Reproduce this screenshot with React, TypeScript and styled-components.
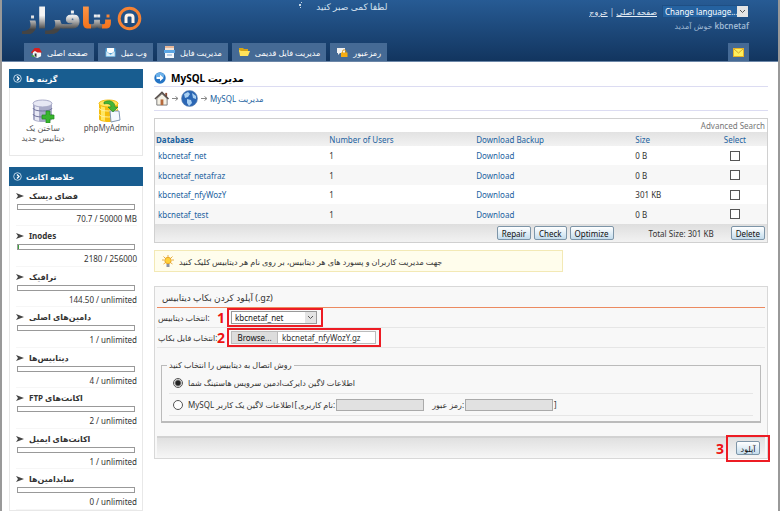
import React from 'react';
import styled, { createGlobalStyle, css } from 'styled-components';

const Global = createGlobalStyle`
  * { box-sizing: border-box; }
  body { margin: 0; background: #fff; }
  body, button, input, select { font-family: "Noto Sans", "DejaVu Sans", sans-serif; font-size: 8px; color: #333; }
  html { overflow: hidden; }
  a { color: #1b62a0; text-decoration: none; }
`;

const Page = styled.div`
  border-left: 2px solid #999;
  border-right: 2px solid #999;
  height: 100vh;
  overflow: hidden;
`;
const Header = styled.header`
  height: 62px;
  padding: 0 29px 0 20px;
  background: linear-gradient(#275b94, #12355f);
  border-bottom: 1px solid #6c87a8;
  color: #d5e2ef;
  display: flex;
  flex-direction: column;
  justify-content: space-between;
`;
const HeaderTop = styled.div`
  display: grid;
  grid-template-columns: 38% auto 1fr;
  height: 40px;
`;
const Brand = styled.div`
  display: flex;
  align-items: center;
  gap: 4px;
  height: 37px;
`;
const Word = styled.span`
  font: bold 27px/34px "DejaVu Sans", sans-serif;
  white-space: nowrap;
`;
const Part = styled.span<{ $orange?: boolean }>`
  color: transparent;
  -webkit-text-stroke: 1px transparent;
  background: ${p => (p.$orange ? 'linear-gradient(#ff9a4c, #f26a10)' : 'linear-gradient(#f4f4f4 40%, #aaa 60%, #444 85%)')};
  background-clip: text;
  -webkit-background-clip: text;
`;
const Wait = styled.div`
  display: flex;
  gap: 12px;
  line-height: 14px;
  font-size: 9px;
`;
const Account = styled.div`
  display: flex;
  flex-direction: column;
  align-items: flex-end;
  padding-top: 5px;
`;
const AccountRow = styled.div`
  display: flex;
  align-items: center;
  gap: 5px;
  a { color: #e6eef6; text-decoration: underline; }
`;
const Language = styled.select`
  width: 87px;
  height: 13px;
  padding: 0 0 0 2px;
  border: 1px solid #1f4f84;
  background: #2562a0;
  color: #fff;
  line-height: 11px;
  appearance: none;
`;
const Welcome = styled.span`
  color: #9fb9d4;
  line-height: 15px;
  b { font-weight: 600; }
`;
const SelectBox = styled.span`
  display: inline-grid;
  align-items: center;
  > * { grid-area: 1 / 1; }
  > svg { justify-self: end; margin-right: 1px; pointer-events: none; }
`;
const Nav = styled.nav`
  display: flex;
  gap: 4px;
  padding-left: 2px;
`;
const Tab = styled.a<{ $end?: boolean }>`
  display: flex;
  align-items: center;
  gap: 5px;
  height: 18px;
  padding: 0 6px 0 7px;
  background: #456a95;
  && { color: #fff; }
  ${p => p.$end && css`margin-left: auto; padding: 0 5px;`}
`;
const Body = styled.div`
  display: grid;
  grid-template-columns: 134px minmax(0, 1fr);
  gap: 11px;
  padding: 7px 10px 0 7px;
`;
const Side = styled.aside`
  display: flex;
  flex-direction: column;
  gap: 11px;
`;
const PanelTitle = styled.h2`
  display: flex;
  align-items: center;
  gap: 4px;
  height: 19px;
  margin: 0 -1px;
  padding: 0 4px;
  background: #185d90;
  color: #fff;
  font-size: 8px;
  font-weight: 700;
`;
const Panel = styled.section`
  border: 1px solid #e8e8e8;
  border-top: 0;
`;
const Tools = styled.div`
  display: grid;
  grid-template-columns: 1fr 1fr;
  height: 67px;
  padding-top: 11px;
  a { display: flex; flex-direction: column; align-items: center; color: #555; text-align: center; line-height: 10px; }
`;
const Stat = styled.div`
  margin: 0 5px 0 6px;
  padding: 2px 0 0;
  height: 41px;
  &:nth-of-type(odd) { height: 40px; }
  border-bottom: 1px solid #f6f6f6;
`;
const StatName = styled.div`
  display: flex;
  align-items: center;
  gap: 5px;
  line-height: 16px;
  font-weight: 700;
`;
const Bar = styled.div`
  height: 6px;
  margin: 0 2px 0 1px;
  border: 1px solid #999;
  background: #fff;
`;
const Fill = styled.div`
  height: 4px;
  background: #3ca03c;
`;
const StatValue = styled.div`
  text-align: right;
  line-height: 17px;
`;
const Main = styled.main`
  min-width: 0;
`;
const Title = styled.h1`
  display: flex;
  align-items: center;
  gap: 5px;
  height: 18px;
  margin: 0;
  color: #000;
  font-size: 10px;
  border-bottom: 1px solid #dcdcf2;
`;
const Crumbs = styled.div`
  display: flex;
  align-items: center;
  gap: 2px;
  height: 24px;
  border-bottom: 1px solid #dcdcf2;
  color: #777;
`;
const TableBox = styled.section`
  margin-top: 7px;
  border: 1px solid #d0d0d0;
`;
const Advanced = styled.div`
  height: 13px;
  line-height: 14px;
  padding-right: 2px;
  text-align: right;
  a { color: #777; }
`;
const Table = styled.table`
  width: 100%;
  table-layout: fixed;
  border-spacing: 0;
  line-height: 13px;
  th, td { padding: 0 3px; text-align: left; font-weight: 400; }
  th { height: 14px; color: #1b62a0; }
  th:first-child { padding-left: 1px; font-weight: 700; }
  th:last-child { text-align: center; padding: 0 3px 0 0; }
  td:last-child { padding: 0 3px 0 0; }
  thead tr { background: linear-gradient(#e2e2e2, #f2f2f2); }
  tbody tr { height: 19px; }
  tbody tr:nth-child(even) { height: 20px; background: #f7f7f7; }
`;
const Col = styled.col<{ $w: number }>`
  width: ${p => p.$w}%;
`;
const Tick = styled.input`
  appearance: none;
  display: block;
  width: 10px;
  height: 10px;
  margin: 0 auto;
  border: 1px solid #555;
  background: #fff;
`;
const Actions = styled.div`
  display: flex;
  align-items: center;
  justify-content: flex-end;
  gap: 3px;
  height: 18px;
  padding-right: 2px;
  background: linear-gradient(#dedede, #f2f2f2);
`;
const Total = styled.span`
  margin: 0 14px 0 32px;
`;
const Button = styled.button`
  height: 14px;
  padding: 0 4px;
  line-height: 11px;
  border: 1px solid #7d95a8;
  border-radius: 2px;
  background: linear-gradient(#fff, #dcebf5 60%, #c4dcec);
  color: #111;
`;
const Hint = styled.div`
  display: flex;
  align-items: center;
  gap: 5px;
  width: 66.6%;
  height: 22px;
  margin-top: 7px;
  padding-left: 7px;
  border: 1px solid #f3e9b5;
  background: #fffdec;
`;
const Form = styled.form`
  margin-top: 14px;
  border: 1px solid #d8d8d8;
  background: #f8f8f8;
  padding: 0 2px;
`;
const FormTitle = styled.h2`
  height: 21px;
  margin: 0;
  padding: 2px 5px 0;
  line-height: 18px;
  font-size: 9px;
  font-weight: 400;
  border-bottom: 1px solid #ec8a60;
`;
const Line = styled.div`
  display: flex;
  align-items: center;
  height: 20px;
  border-bottom: 1px solid #e6e6e6;
  label { width: 58px; padding-left: 1px; white-space: nowrap; }
`;
const Step = styled.b`
  width: 12px;
  text-align: center;
  color: #ee1111;
  font: bold 14px "Open Sans", sans-serif;
`;
const Mark = styled.span<{ $w: number }>`
  display: flex;
  align-items: center;
  width: ${p => p.$w}px;
  height: 19px;
  padding: 0 2px;
  border: 2px solid #ed1c24;
`;
const DbSelect = styled.select`
  width: 86px;
  height: 13px;
  padding: 0 3px;
  border: 1px solid #999;
  background: #fff;
  color: #222;
  line-height: 11px;
  appearance: none;
`;
const FileBox = styled.div`
  display: flex;
  width: 145px;
  height: 13px;
  border: 1px solid #bbb;
  background: #fff;
`;
const Browse = styled.button`
  width: 46px;
  padding: 0;
  border: 0;
  border-right: 1px solid #bbb;
  background: #ddd;
  color: #111;
  line-height: 11px;
`;
const FileName = styled.input`
  flex: 1;
  min-width: 0;
  padding: 0 4px;
  border: 0;
  background: none;
`;
const Methods = styled.fieldset`
  margin: 10px 4px 13px;
  padding: 0 7px 5px;
  border: 1px solid #bbb;
  border-bottom-width: 2px;
  legend { padding: 0 2px; margin-left: -2px; line-height: 14px; }
`;
const Choice = styled.div`
  display: flex;
  align-items: center;
  height: 22px;
  padding-left: 4px;
  border-bottom: 1px solid #e6e6e6;
  white-space: nowrap;
`;
const Radio = styled.input`
  appearance: none;
  width: 10px;
  height: 10px;
  margin: 0 5px 0 0;
  border: 1px solid #555;
  border-radius: 50%;
  background: #fff;
  &:checked { background: radial-gradient(#222 0 2px, #fff 4px); }
`;
const Credential = styled.input`
  width: 88px;
  height: 12px;
  margin: 0 0 0 1px;
  border: 1px solid #aaa;
  background: #e1e1e1;
`;
const PassLabel = styled.label`
  margin-left: 8px;
`;
const Bracket = styled.span`
  margin: 0 1px;
`;
const Submit = styled.div`
  display: flex;
  align-items: center;
  justify-content: flex-end;
  height: 22px;
  border-top: 2px solid #d2d2d2;
  background: linear-gradient(#e0e0e0, #f6f6f6);
`;
const SubmitMark = styled.span`
  display: flex;
  align-items: center;
  justify-content: center;
  width: 44px;
  height: 27px;
  margin-right: -5px;
  border: 2px solid #ed1c24;
`;

const Arrow = () => (
  <svg width="11" height="11" viewBox="0 0 11 11"><rect width="11" height="11" fill="#e4e4e4" /><path d="M3 4l2.500 2.500L8 4" fill="none" stroke="#555" /></svg>
);
const Disc = () => (
  <svg width="9" height="9" viewBox="0 0 9 9"><circle cx="4.500" cy="4.500" r="3.800" fill="none" stroke="#b9d2e5" /><path d="M4 2.500L6 4.500 4 6.500" fill="none" stroke="#fff" strokeWidth="1.300" /></svg>
);
const Pointer = () => (
  <svg width="8" height="6" viewBox="0 0 8 6"><path d="M0 0L8 3 0 6 2 3z" fill="#444" /></svg>
);
const LogoMark = () => (
  <svg width="25" height="25" viewBox="0 0 25 25">
    <circle cx="12.500" cy="12.500" r="10.300" fill="none" stroke="#f58233" strokeWidth="3" />
    <path d="M9 17v-5.500a2.500 2.500 0 0 1 2.500-2.500h2a2.500 2.500 0 0 1 2.500 2.500V17" fill="none" stroke="#fff3e8" strokeWidth="3" />
  </svg>
);
const Home = ({ size }: { size: number }) => (
  <svg width={size} height={size} viewBox="0 0 16 16">
    <path d="M12 2h2v4h-2z" fill="#8b4a32" />
    <path d="M3 8v7h11V8L8.500 3z" fill="#f4f0e4" stroke="#777" />
    <path d="M1 8.500L8.500 1.500 15.500 8.500" fill="none" stroke="#554c48" strokeWidth="1.600" />
    <path d="M7 9h3v6H7z" fill="#b5683a" />
  </svg>
);
const RedHome = () => (
  <svg width="11" height="11" viewBox="0 0 12 12">
    <path d="M2 5l5-1 4 2v4l-4 2-5-2z" fill="#f4f4f4" /><path d="M0 6l4-5 5 0 3 5-5 0-3-2-3 3z" fill="#d61f1f" /><path d="M4 7h2v4L4 10z" fill="#333" /><path d="M0 9l3 0 1 2H2z" fill="#3ba336" />
  </svg>
);
const MailIcon = () => (
  <svg width="11" height="11" viewBox="0 0 11 11"><rect x=".5" y="1" width="10" height="9" rx="1" fill="#4d9fd6" /><path d="M2 1h7v5H2z" fill="#fff" /><path d="M1 4l4.500 3.500L10 4v5.500H1z" fill="#d9edf9" stroke="#68a9d2" strokeWidth=".6" /></svg>
);
const FileIcon = () => (
  <svg width="11" height="12" viewBox="0 0 11 12"><path d="M1 0h9v6H1z" fill="#f3e4d8" /><path d="M1 1h9" stroke="#dc8a58" /><path d="M0 4h11v3H0z" fill="#5ba5e4" /><path d="M1 7h9v5H1z" fill="#f3f7fc" /><path d="M3 9h5" stroke="#82a8d2" /></svg>
);
const Folder = () => (
  <svg width="11" height="10" viewBox="0 0 11 10"><path d="M0 1h4l1 1h4v3H0z" fill="#d7a512" /><path d="M2 4h9L9 9H1L0 3z" fill="#ffe25a" /></svg>
);
const Lock = () => (
  <svg width="11" height="11" viewBox="0 0 11 11"><path d="M0 1h8v5H3L1 8V6H0z" fill="#f2f2f2" /><path d="M5.500 6V4.500a1.700 1.700 0 0 1 3.400 0V6" fill="none" stroke="#d89815" /><path d="M4 5.500h6.500V10H4z" fill="#f5ac13" /></svg>
);
const Note = () => (
  <svg width="11" height="9" viewBox="0 0 11 9"><rect width="11" height="9" fill="#e6b229" /><rect x="1" y="1" width="9" height="7" fill="#ffef5b" /><path d="M1 1l4.500 4L10 1" fill="none" stroke="#d2a72e" /></svg>
);
const Cylinder = ({ gold }: { gold?: boolean }) => {
  const a = gold ? '#f5bd0e' : '#a9abc8';
  const b = gold ? '#ffe763' : '#e7e8f4';
  return (
    <svg width="24" height="24" viewBox="0 0 24 24">
      <path d="M2 4v16c0 4 19 4 19 0V4z" fill={a} />
      <path d="M4 7v14l4 1V8z" fill={b} />
      <ellipse cx="11.500" cy="4.500" rx="9.500" ry="3.500" fill={b} stroke={a} />
      <path d="M2 9c0 4 19 4 19 0M2 15c0 4 19 4 19 0" fill="none" stroke={gold ? '#fff0a0' : '#74769e'} />
      {gold ? (
        <>
          <path d="M13 12h9l1 9-9 2z" fill="#f5faff" stroke="#8298b5" />
          <path d="M7 3c6-3 11 0 11 5h3l-5 5-5-5h3c0-3-3-4-7-3z" fill="#45b537" stroke="#268521" strokeWidth=".6" />
        </>
      ) : (
        <path d="M15 12h4v4h4v4h-4v4h-4v-4h-4v-4h4z" fill="#39b52e" stroke="#218a1d" strokeWidth=".7" />
      )}
    </svg>
  );
};
const BlueArrow = () => (
  <svg width="12" height="12" viewBox="0 0 12 12">
    <circle cx="6" cy="6" r="5.700" fill="#2474c5" /><ellipse cx="6" cy="3.500" rx="4.200" ry="2.800" fill="#6cb1ea" /><path d="M2.500 5H6V2.800L9.700 6 6 9.200V7H2.500z" fill="#fff" />
  </svg>
);
const Globe = () => (
  <svg width="17" height="17" viewBox="0 0 17 17">
    <circle cx="8.500" cy="8.500" r="8" fill="#2a66b4" stroke="#6787b0" strokeWidth=".6" />
    <path d="M3 4l4-2 2 2-2 3-3 1zM6 9l4 1 1 3-3 3-2-3zM11 3l4 3v3l-3-1z" fill="#a9d0f2" />
  </svg>
);
const CrumbArrow = () => (
  <svg width="8" height="7" viewBox="0 0 8 7"><path d="M1 3.500h6M4.500 1.500l2.500 2-2.500 2" fill="none" stroke="#888" /></svg>
);
const Bulb = () => (
  <svg width="12" height="13" viewBox="0 0 12 13">
    <path d="M6 0v2M0 5h2M10 5h2M1.500 1.500L3 3M10.500 1.500L9 3M1.500 9L3 8M10.500 9L9 8" stroke="#e9b04a" />
    <circle cx="6" cy="5.500" r="3.200" fill="#ffd23b" stroke="#e8a52c" /><path d="M4.500 9h3v3h-3z" fill="#8b93a5" />
  </svg>
);

const tabs: [string, React.ReactNode][] = [
  ['صفحه اصلی', <RedHome />],
  ['وب میل', <MailIcon />],
  ['مدیریت فایل', <FileIcon />],
  ['مدیریت فایل قدیمی', <Folder />],
  ['رمزعبور', <Lock />],
];
const stats: [string, string, number][] = [
  ['فضای دیسک', '70.7 / 50000 MB', 0],
  ['Inodes', '2180 / 256000', 1],
  ['ترافیک', '144.50 / unlimited', 0],
  ['دامین‌های اصلی', '1 / unlimited', 0],
  ['دیتابیس‌ها', '4 / unlimited', 0],
  ['اکانت‌های FTP', '2 / unlimited', 0],
  ['اکانت‌های ایمیل', '1 / unlimited', 0],
  ['سابدامین‌ها', '0 / unlimited', 0],
];
const databases = [
  ['kbcnetaf_net', '0 B'],
  ['kbcnetaf_netafraz', '0 B'],
  ['kbcnetaf_nfyWozY', '301 KB'],
  ['kbcnetaf_test', '0 B'],
];

export default function App() {
  return (
    <>
      <Global />
      <Page>
        <Header>
          <HeaderTop>
            <Brand>
              <Word dir="rtl"><Part $orange>ن</Part><Part>ت</Part><Part $orange>ا</Part><Part>فراز</Part></Word>
              <LogoMark />
            </Brand>
            <Wait>
              <svg width="6" height="10" viewBox="0 0 6 10"><path d="M1 4h2v2H1zM2 7h1v1H2zM3 2h1v1H3z" fill="#c7d8e8" /></svg>
              <span dir="rtl">لطفا کمی صبر کنید</span>
            </Wait>
            <Account>
              <AccountRow>
                <span dir="rtl"><a href="#home">صفحه اصلی</a> | <a href="#logout">خروج</a></span>
                <SelectBox>
                  <Language aria-label="Language"><option>Change language...</option></Language>
                  <Arrow />
                </SelectBox>
              </AccountRow>
              <Welcome dir="rtl"><b>kbcnetaf</b> خوش آمدید</Welcome>
            </Account>
          </HeaderTop>
          <Nav>
            {tabs.map(([name, icon]) => (
              <Tab href="#tab" key={name}>{icon}<span dir="rtl">{name}</span></Tab>
            ))}
            <Tab $end href="#messages" aria-label="Messages"><Note /></Tab>
          </Nav>
        </Header>
        <Body>
          <Side>
            <Panel>
              <PanelTitle><Disc />گزینه ها</PanelTitle>
              <Tools>
                <a href="#create"><Cylinder /><span dir="rtl">ساختن یک<br />دیتابیس جدید</span></a>
                <a href="#phpmyadmin"><Cylinder gold /><span>phpMyAdmin</span></a>
              </Tools>
            </Panel>
            <Panel>
              <PanelTitle><Disc />خلاصه اکانت</PanelTitle>
              {stats.map(([name, value, used]) => (
                <Stat key={name}>
                  <StatName><Pointer /><span dir="rtl">{name}</span></StatName>
                  <Bar><Fill style={{ width: `${used}%` }} /></Bar>
                  <StatValue>{value}</StatValue>
                </Stat>
              ))}
            </Panel>
          </Side>
          <Main>
            <Title><BlueArrow /><span dir="rtl">مدیریت MySQL</span></Title>
            <Crumbs><Home size={15} /><CrumbArrow /><Globe /><CrumbArrow /><a href="#mysql" dir="rtl">مدیریت MySQL</a></Crumbs>
            <TableBox>
              <Advanced><a href="#search">Advanced Search</a></Advanced>
              <Table>
                <colgroup><Col $w={28} /><Col $w={24} /><Col $w={26} /><Col $w={12} /><Col $w={10} /></colgroup>
                <thead>
                  <tr><th>Database</th><th>Number of Users</th><th>Download Backup</th><th>Size</th><th>Select</th></tr>
                </thead>
                <tbody>
                  {databases.map(([name, size]) => (
                    <tr key={name}>
                      <td><a href="#db">{name}</a></td><td>1</td><td><a href="#download">Download</a></td><td>{size}</td>
                      <td><Tick type="checkbox" aria-label={name} /></td>
                    </tr>
                  ))}
                </tbody>
              </Table>
              <Actions>
                <Button>Repair</Button><Button>Check</Button><Button>Optimize</Button>
                <Total>Total Size: 301 KB</Total>
                <Button>Delete</Button>
              </Actions>
            </TableBox>
            <Hint><Bulb /><span dir="rtl">جهت مدیریت کاربران و پسورد های هر دیتابیس، بر روی نام هر دیتابیس کلیک کنید</span></Hint>
            <Form onSubmit={e => e.preventDefault()}>
              <FormTitle>آپلود کردن بکاپ دیتابیس (.gz)</FormTitle>
              <Line>
                <label htmlFor="db">انتخاب دیتابیس:</label><Step>1</Step>
                <Mark $w={96}>
                  <SelectBox><DbSelect id="db"><option>kbcnetaf_net</option></DbSelect><Arrow /></SelectBox>
                </Mark>
              </Line>
              <Line>
                <label htmlFor="file">انتخاب فایل بکاپ:</label><Step>2</Step>
                <Mark $w={154}>
                  <FileBox><Browse type="button">Browse...</Browse><FileName id="file" readOnly value="kbcnetaf_nfyWozY.gz" /></FileBox>
                </Mark>
              </Line>
              <Methods>
                <legend>روش اتصال به دیتابیس را انتخاب کنید</legend>
                <Choice>
                  <Radio type="radio" name="method" id="hosting" defaultChecked />
                  <label htmlFor="hosting">اطلاعات لاگین دایرکت‌ادمین سرویس هاستینگ شما</label>
                </Choice>
                <Choice>
                  <Radio type="radio" name="method" id="mysql" />
                  <label htmlFor="mysql" dir="rtl">اطلاعات لاگین یک کاربر MySQL</label>
                  <Bracket>[</Bracket>
                  <label htmlFor="user">نام کاربری:</label><Credential id="user" disabled />
                  <PassLabel htmlFor="pass">رمز عبور:</PassLabel><Credential id="pass" type="password" disabled />
                  <Bracket>]</Bracket>
                </Choice>
              </Methods>
              <Submit><Step>3</Step><SubmitMark><Button>آپلود</Button></SubmitMark></Submit>
            </Form>
          </Main>
        </Body>
      </Page>
    </>
  );
}
